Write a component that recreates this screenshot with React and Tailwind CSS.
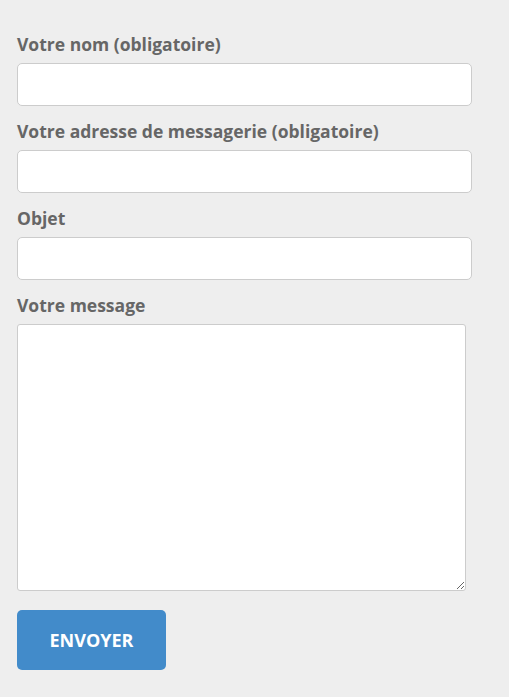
export default function App() {
  const label = "block h-6 leading-6 text-[17.5px] font-bold text-[#666666] mb-[7px]";
  const input = "block w-[455px] h-[43px] bg-white border border-[#cccccc] rounded-[5px] mb-[13px]";
  return (
    <div className="min-h-[697px] w-[509px] bg-[#eeeeee] pt-8 pl-[17px]" style={{ fontFamily: '"Open Sans", sans-serif' }}>
      <form onSubmit={(e) => e.preventDefault()}>
        <label className={label}>Votre nom (obligatoire)</label>
        <input type="text" className={input} />
        <label className={label}>Votre adresse de messagerie (obligatoire)</label>
        <input type="email" className={input} />
        <label className={label}>Objet</label>
        <input type="text" className={input} />
        <label className={label}>Votre message</label>
        <textarea className="block w-[449px] h-[267px] bg-white border border-[#cccccc] rounded-[3px] mt-[2px] mb-[19px]" />
        <button type="submit" className="block w-[149px] h-[60px] bg-[#428bca] text-white text-[18px] font-bold rounded-[5px]">
          ENVOYER
        </button>
      </form>
    </div>
  );
}
